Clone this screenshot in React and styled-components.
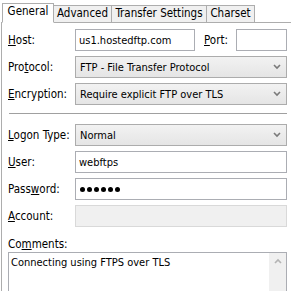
import React from "react";
import styled, { createGlobalStyle } from "styled-components";

const GlobalStyle = createGlobalStyle`
  body {
    margin: 0;
    background: #ffffff;
    font-family: "DejaVu Sans Condensed", "DejaVu Sans", sans-serif;
    font-size: 11px;
    color: #000;
  }
`;

const Wrapper = styled.div`
  width: 291px;
  height: 291px;
  overflow: hidden;
  padding-left: 1px;
  box-sizing: border-box;
`;

const TabBar = styled.div`
  display: flex;
  align-items: flex-end;
  height: 22px;
  padding-left: 1px;
  position: relative;
  z-index: 1;
`;

const Tab = styled.div`
  width: ${(p) => p.$w}px;
  height: ${(p) => (p.$active ? "20px" : "17px")};
  margin-left: ${(p) => (p.$active ? "0" : "-1px")};
  margin-bottom: ${(p) => (p.$active ? "-1px" : "0")};
  border: 1px solid #adadad;
  border-bottom: ${(p) => (p.$active ? "1px solid #fff" : "none")};
  background: ${(p) => (p.$active ? "#fff" : "#f0f0f0")};
  display: flex;
  align-items: center;
  justify-content: center;
  padding-bottom: ${(p) => (p.$active ? "2px" : "0")};
  box-sizing: border-box;
  white-space: nowrap;
  font-size: 11.5px;
  line-height: 1;
`;

const Panel = styled.div`
  border-top: 1px solid #adadad;
  border-left: 1px solid #adadad;
  padding: 6px 4px 0 6px;
  display: flex;
  flex-direction: column;
  gap: 5px;
`;

const Row = styled.div`
  display: grid;
  grid-template-columns: 67px 1fr;
  align-items: center;
`;

const HostRow = styled.div`
  display: grid;
  grid-template-columns: 67px 120px 41px 1fr;
  align-items: center;
`;

const Label = styled.span`
  font-size: 11.5px;
  white-space: nowrap;
  padding-left: ${(p) => p.$indent || 0}px;
  u {
    text-decoration: underline;
  }
`;

const Input = styled.div`
  height: 20px;
  border: 1px solid ${(p) => (p.$disabled ? "#d9d9d9" : "#abadb3")};
  background: ${(p) => (p.$disabled ? "#f0f0f0" : "#fff")};
  display: flex;
  align-items: center;
  padding-left: 3px;
  font-size: 11px;
  white-space: nowrap;
  overflow: hidden;
  box-sizing: content-box;
  ${(p) => p.$narrow && "width: 46px;"}
`;

const Dots = styled.span`
  display: flex;
  gap: 2px;
  padding-left: 1px;
`;

const Dot = styled.span`
  width: 5px;
  height: 5px;
  border-radius: 50%;
  background: #000;
`;

const Select = styled.div`
  height: 20px;
  border: 1px solid #acacac;
  background: linear-gradient(#f2f2f2, #e5e5e5);
  display: flex;
  align-items: center;
  justify-content: space-between;
  padding: 0 5px 0 4px;
  font-size: 11px;
  white-space: nowrap;
`;

const Chevron = ({ up }) => (
  <svg width="8" height="6" viewBox="0 0 8 6">
    <path
      d={up ? "M1 5 L4 2 L7 5" : "M1 1 L4 4 L7 1"}
      fill="none"
      stroke={up ? "#b4b4b4" : "#7a7a7a"}
      strokeWidth="1.6"
    />
  </svg>
);

const Separator = styled.div`
  height: 1px;
  background: #a0a0a0;
  margin: 3px 0 5px 1px;
`;

const CommentsLabel = styled(Label)`
  margin-top: 5px;
`;

const TextArea = styled.div`
  margin-top: -4px;
  height: 60px;
  border: 1px solid #abadb3;
  display: flex;
  font-size: 11px;
`;

const TextBody = styled.div`
  flex: 1;
  padding: 3px 2px;
`;

const ScrollBar = styled.div`
  width: 17px;
  background: #f0f0f0;
  display: flex;
  justify-content: center;
  padding-top: 5px;
`;

export default function App() {
  return (
    <Wrapper>
      <GlobalStyle />
      <TabBar>
        <Tab $active $w={52}>General</Tab>
        <Tab $w={59}>Advanced</Tab>
        <Tab $w={96}>Transfer Settings</Tab>
        <Tab $w={49}>Charset</Tab>
      </TabBar>
      <Panel>
        <HostRow>
          <Label><u>H</u>ost:</Label>
          <Input>us1.hostedftp.com</Input>
          <Label $indent={9}><u>P</u>ort:</Label>
          <Input $narrow />
        </HostRow>
        <Row>
          <Label>Pro<u>t</u>ocol:</Label>
          <Select>FTP - File Transfer Protocol <Chevron /></Select>
        </Row>
        <Row>
          <Label><u>E</u>ncryption:</Label>
          <Select>Require explicit FTP over TLS <Chevron /></Select>
        </Row>
        <Separator />
        <Row>
          <Label><u>L</u>ogon Type:</Label>
          <Select>Normal <Chevron /></Select>
        </Row>
        <Row>
          <Label><u>U</u>ser:</Label>
          <Input>webftps</Input>
        </Row>
        <Row>
          <Label>Pass<u>w</u>ord:</Label>
          <Input>
            <Dots>
              {[0, 1, 2, 3, 4, 5].map((i) => (
                <Dot key={i} />
              ))}
            </Dots>
          </Input>
        </Row>
        <Row>
          <Label><u>A</u>ccount:</Label>
          <Input $disabled />
        </Row>
        <CommentsLabel>Co<u>m</u>ments:</CommentsLabel>
        <TextArea>
          <TextBody>Connecting using FTPS over TLS</TextBody>
          <ScrollBar><Chevron up /></ScrollBar>
        </TextArea>
      </Panel>
    </Wrapper>
  );
}
